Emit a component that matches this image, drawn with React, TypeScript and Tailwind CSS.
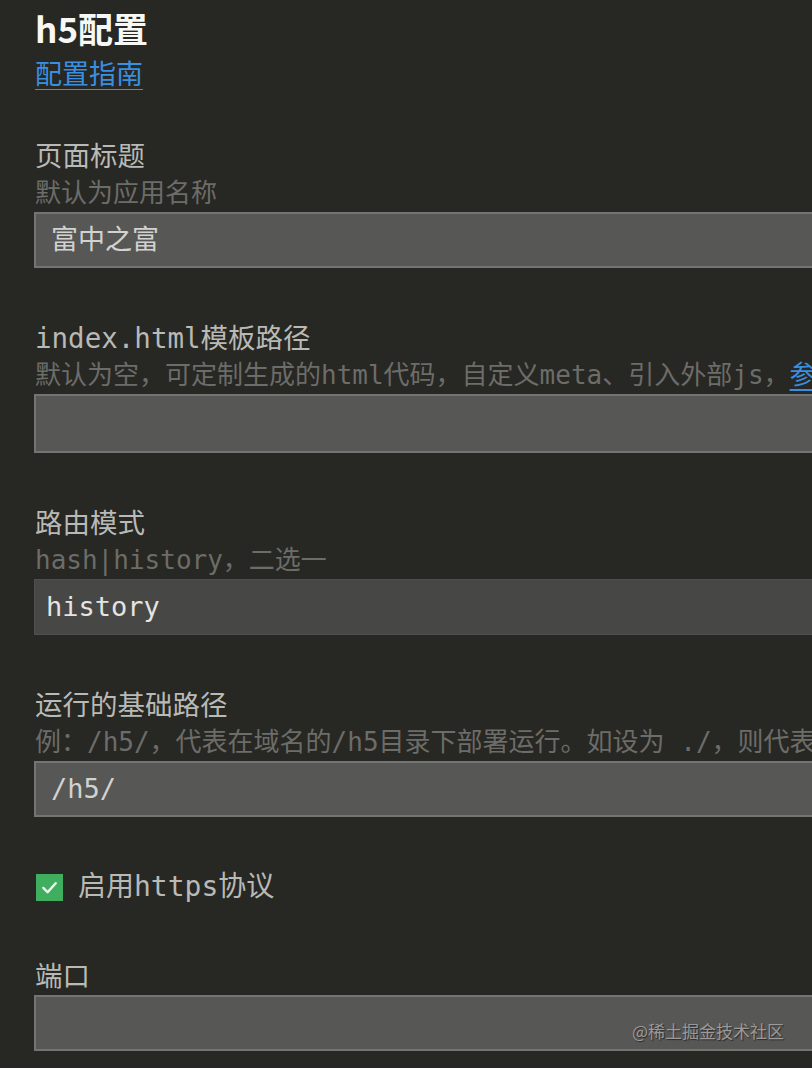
const font = { fontFamily: '"DejaVu Sans Mono", "Noto Sans CJK SC", monospace' };

function Field({
  label,
  hint,
  value,
  focused,
  tall,
}: {
  label: string;
  hint?: React.ReactNode;
  value?: string;
  focused?: boolean;
  tall?: boolean;
}) {
  return (
    <div className="mt-[52px]">
      <div className="text-[27.5px] leading-[36px] text-[#b9b9b6]">{label}</div>
      {hint && (
        <div className="text-[26px] leading-[38px] text-[#6c6c69] whitespace-nowrap">{hint}</div>
      )}
      <div
        className={`-ml-px w-[900px] flex items-center ${tall ? "h-[59px]" : "h-[56px]"} ${
          focused
            ? "bg-[#474746] border border-[#4f4f4e] pl-[11px]"
            : "bg-[#575756] border-2 border-[#747472] pl-[15px]"
        }`}
      >
        {value && (
          <span className={`text-[27px] ${focused ? "text-[#e4e4e2]" : "text-[#d2d2d0]"}`}>{value}</span>
        )}
      </div>
    </div>
  );
}

export default function App() {
  return (
    <div className="relative w-[812px] h-[1068px] overflow-hidden bg-[#272723] pl-[35px]" style={font}>
      <div
        className="pt-[8px] text-[35px] leading-[40px] font-bold text-[#f7f7f5]"
        style={{ fontFamily: '"Noto Sans CJK SC", sans-serif' }}
      >
        h5配置
      </div>
      <div className="mt-[8px] leading-[38px]">
        <span className="text-[27px] text-[#3a8fe0] underline decoration-1 underline-offset-[5px]">配置指南</span>
      </div>

      <div className="-mt-[12px]">
        <Field label="页面标题" hint="默认为应用名称" value="富中之富" />
      </div>
      <Field
        label="index.html模板路径"
        hint={
          <>
            默认为空，可定制生成的html代码，自定义meta、引入外部js，
            <span className="text-[#3a8fe0] underline underline-offset-[5px]">参考</span>
          </>
        }
        tall
      />
      <Field label="路由模式" hint="hash|history，二选一" value="history" focused />
      <Field label="运行的基础路径" hint="例：/h5/，代表在域名的/h5目录下部署运行。如设为 ./，则代表相对路径" value="/h5/" />

      <div className="mt-[53px] flex items-center h-[34px]">
        <div className="w-[27px] h-[27px] bg-[#3fae5f] flex items-center justify-center ml-px">
          <svg width="19" height="19" viewBox="0 0 20 20" fill="none">
            <path d="M3.5 10.5 L8 15 L16.5 5.5" stroke="#eef7ee" strokeWidth="2.6" strokeLinecap="round" strokeLinejoin="round" />
          </svg>
        </div>
        <span className="ml-[15px] text-[28px] text-[#b9b9b6]">启用https协议</span>
      </div>

      <div className="mt-[54px]">
        <div className="text-[27.5px] leading-[36px] text-[#b9b9b6]">端口</div>
        <div className="-ml-px mt-px w-[900px] h-[56px] bg-[#575756] border-2 border-[#747472]" />
      </div>

      <div
        className="absolute left-[632px] top-[1018px] text-[17px] text-[#9a9a98] [text-shadow:1px_1px_1px_#2a2a2a]"
        style={{ fontFamily: '"Noto Sans CJK SC", sans-serif' }}
      >
        @稀土掘金技术社区
      </div>
    </div>
  );
}
